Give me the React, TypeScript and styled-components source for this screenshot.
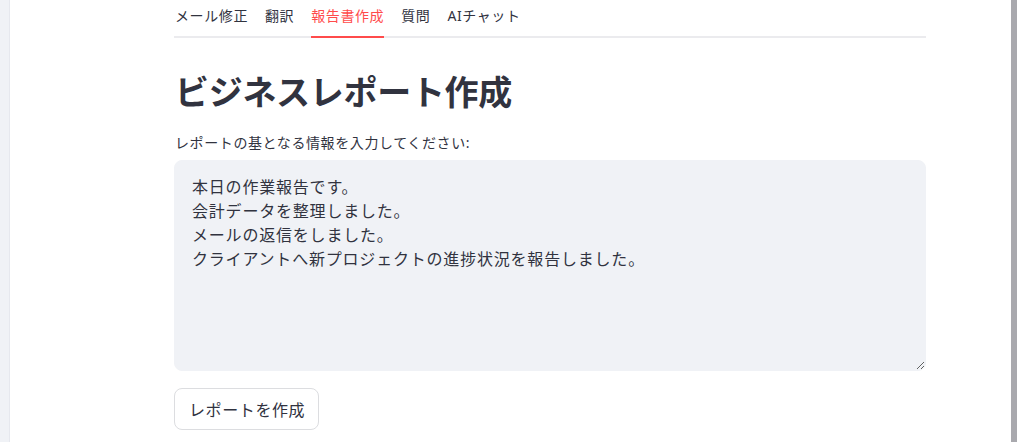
import styled, { createGlobalStyle } from "styled-components";

const GlobalStyle = createGlobalStyle`
  html, body {
    margin: 0;
    padding: 0;
    background: #ffffff;
    overflow: hidden;
  }
  body {
    font-family: "Noto Sans", "Noto Sans CJK JP", sans-serif;
    color: #31333f;
  }
`;

const tabs = ["メール修正", "翻訳", "報告書作成", "質問", "AIチャット"];

const reportText = `本日の作業報告です。
会計データを整理しました。
メールの返信をしました。
クライアントへ新プロジェクトの進捗状況を報告しました。`;

const App = () => {
  return (
    <>
      <GlobalStyle />
      <SCPage>
        <SCSideEdge />
        <SCMain>
          <SCContent>
            <SCTabList>
              {tabs.map((t, i) => (
                <SCTab key={t} $active={i === 2}>
                  {t}
                </SCTab>
              ))}
            </SCTabList>
            <SCTitle>ビジネスレポート作成</SCTitle>
            <SCLabel>レポートの基となる情報を入力してください:</SCLabel>
            <SCTextArea defaultValue={reportText} />
            <SCButton type="button">レポートを作成</SCButton>
          </SCContent>
        </SCMain>
        <SCScrollTrack>
          <SCScrollThumb />
        </SCScrollTrack>
      </SCPage>
    </>
  );
};

export default App;

const SCPage = styled.div`
  display: flex;
  height: 442px;
  width: 1024px;
`;

const SCSideEdge = styled.div`
  width: 10px;
  flex-shrink: 0;
  background: #f0f2f6;
  border-right: 1px solid #e6e8ee;
  box-sizing: border-box;
`;

const SCMain = styled.main`
  flex: 1;
  padding-left: 164px;
  box-sizing: border-box;
`;

const SCContent = styled.div`
  width: 752px;
  display: flex;
  flex-direction: column;
  align-items: flex-start;
`;

const SCTabList = styled.div`
  display: flex;
  gap: 17px;
  align-self: stretch;
  height: 36px;
  border-bottom: 2px solid #ebebee;
  padding-left: 1px;
`;

const SCTab = styled.div<{ $active?: boolean }>`
  height: 38px;
  margin-bottom: -2px;
  padding-bottom: 6px;
  box-sizing: border-box;
  display: flex;
  align-items: center;
  font-size: 14px;
  letter-spacing: 0.6px;
  color: ${(p) => (p.$active ? "#ff4b4b" : "#31333f")};
  border-bottom: 2px solid ${(p) => (p.$active ? "#ff4b4b" : "transparent")};
  white-space: nowrap;
`;

const SCTitle = styled.h1`
  margin: 34px 0 0;
  font-size: 34px;
  line-height: 41px;
  font-weight: 700;
  letter-spacing: -0.3px;
  color: #31333f;
  padding-left: 1px;
`;

const SCLabel = styled.label`
  margin-top: 20px;
  font-size: 14px;
  line-height: 20px;
  letter-spacing: 0.6px;
  color: #31333f;
  padding-left: 1px;
`;

const SCTextArea = styled.textarea`
  margin-top: 7px;
  align-self: stretch;
  height: 211px;
  box-sizing: border-box;
  padding: 14px 17px;
  border: 1px solid #f0f2f6;
  border-radius: 8px;
  background: #f0f2f6;
  font-family: "Noto Sans", "Noto Sans CJK JP", sans-serif;
  font-size: 16px;
  line-height: 24px;
  letter-spacing: 0.8px;
  color: #31333f;
  resize: vertical;
  outline: none;
`;

const SCButton = styled.button`
  margin-top: 17px;
  height: 42px;
  padding: 0 13px 0 14px;
  border: 1px solid #dcdde0;
  border-radius: 8px;
  background: #ffffff;
  font-family: "Noto Sans", "Noto Sans CJK JP", sans-serif;
  font-size: 16px;
  letter-spacing: 0.6px;
  color: #31333f;
  cursor: pointer;
`;

const SCScrollTrack = styled.div`
  width: 13px;
  flex-shrink: 0;
`;

const SCScrollThumb = styled.div`
  width: 6px;
  height: 100%;
  background: #a9a9ae;
`;
